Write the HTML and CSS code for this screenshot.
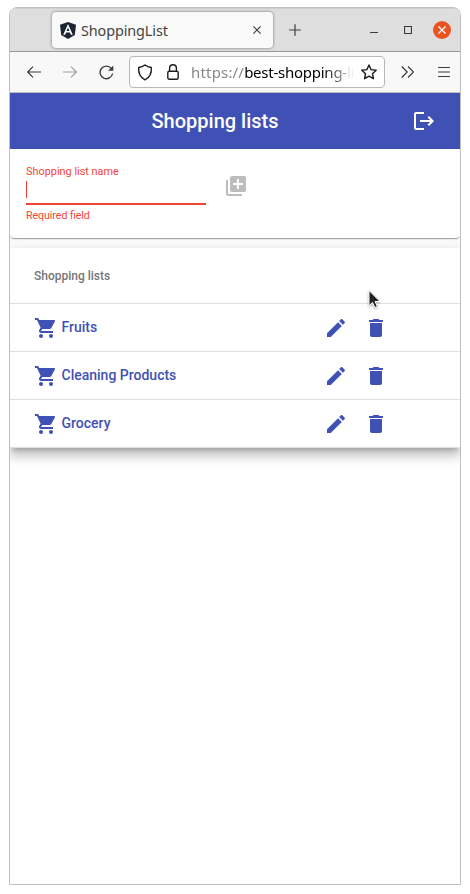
FILE: index.html
```html
<!DOCTYPE html>
<html lang="en">
<head>
<meta charset="utf-8">
<title>ShoppingList</title>
<link rel="stylesheet" href="styles.css">
</head>
<body>
<svg class="defs" width="0" height="0" aria-hidden="true">
  <symbol id="cart" viewBox="0 0 24 24"><path d="M7 18c-1.1 0-1.99.9-1.99 2S5.900 22 7 22s2-.9 2-2-.9-2-2-2zM1 2v2h2l3.600 7.590-1.350 2.450c-.16.28-.25.61-.25.96 0 1.100.9 2 2 2h12v-2H7.420c-.14 0-.25-.11-.25-.25l.03-.12.900-1.630h7.450c.75 0 1.410-.41 1.750-1.030l3.580-6.490c.08-.14.12-.31.12-.48 0-.55-.45-1-1-1H5.210l-.94-2H1zm16 16c-1.100 0-1.990.9-1.990 2s.89 2 1.990 2 2-.9 2-2-.9-2-2-2z"/></symbol>
  <symbol id="edit" viewBox="0 0 24 24"><path d="M3 17.250V21h3.750L17.810 9.940l-3.750-3.750L3 17.250zM20.710 7.040c.39-.39.39-1.020 0-1.410l-2.340-2.340c-.39-.39-1.020-.39-1.410 0l-1.830 1.830 3.750 3.750 1.830-1.830z"/></symbol>
  <symbol id="trash" viewBox="0 0 24 24"><path d="M6 19c0 1.100.9 2 2 2h8c1.100 0 2-.9 2-2V7H6v12zM19 4h-3.500l-1-1h-5l-1 1H5v2h14V4z"/></symbol>
</svg>
<div class="window">
  <header class="titlebar">
    <div class="tab">
      <svg class="favicon" width="16" height="17" viewBox="0 0 16 17"><path fill="#1b2430" d="M8 0l8 2.700-1.200 10.200L8 17l-6.800-4.100L0 2.700z"/><path fill="#fff" fill-rule="evenodd" d="M8 1.900L3.200 12.800h1.900l1-2.400h3.800l1 2.400h1.900zM8 5.500l1.400 3.400H6.600z"/></svg>
      <span class="tab-title">ShoppingList</span>
      <svg class="tab-close" width="8" height="8" viewBox="0 0 8 8"><path d="M.4.4l7.200 7.200M7.600.4L.4 7.600"/></svg>
    </div>
    <svg class="line plus" width="12" height="12" viewBox="0 0 12 12"><path d="M6 .2v11.600M.2 6h11.600"/></svg>
    <svg class="line minimize" width="8" height="10" viewBox="0 0 8 10"><path d="M0 7.500h8"/></svg>
    <svg class="line maximize" width="8" height="8" viewBox="0 0 8 8"><path d="M.5.5h7v7h-7z"/></svg>
    <div class="close"><svg width="8" height="8" viewBox="0 0 8 8"><path d="M.5.5l7 7M7.500.5l-7 7"/></svg></div>
  </header>
  <div class="toolbar">
    <svg class="line back" width="14" height="12" viewBox="0 0 14 12"><path d="M14 6H.8M6 .6L.7 6 6 11.400"/></svg>
    <svg class="line forward" width="14" height="12" viewBox="0 0 14 12"><path d="M0 6h13.200M8 .6L13.300 6 8 11.400"/></svg>
    <svg class="line reload" width="15" height="15" viewBox="0 0 15 15"><path d="M12.400 3.600A6.300 6.300 0 1 0 13.600 8.500"/><path class="solid" d="M14.300.6v5.200H9.100z"/></svg>
    <div class="urlbar">
      <svg class="glyph shield" width="16" height="17" viewBox="0 0 16 17"><path d="M8 1c1.800 1.500 3.900 2.300 6.300 2.500.4 5-1.300 9.800-6.300 12.300C3 13.300 1.300 8.500 1.700 3.500 4.100 3.300 6.200 2.500 8 1z"/></svg>
      <svg class="glyph lock" width="12" height="16" viewBox="0 0 12 16"><rect x=".8" y="7.200" width="10.400" height="8" rx="1.500"/><path d="M2.600 7V4.200a3.400 3.400 0 0 1 6.800 0V7"/></svg>
      <div class="url"><span class="scheme">https://</span><b>best-shopping-</b>li</div>
      <svg class="glyph star" width="16" height="16" viewBox="0 0 16 16"><path d="M8 1l2.100 4.600 5.100.6-3.700 3.500.9 5L8 12.200l-4.400 2.500.9-5L.8 6.200l5.100-.6z"/></svg>
    </div>
    <svg class="line more" width="13" height="12" viewBox="0 0 13 12"><path d="M.7.500L6.200 6 .7 11.500M7 .5L12.500 6 7 11.500"/></svg>
    <svg class="line menu" width="12" height="10" viewBox="0 0 12 10"><path d="M0 .5h12M0 5h12M0 9.500h12"/></svg>
  </div>
  <main class="page">
    <div class="appbar">
      <h1>Shopping lists</h1>
      <svg class="logout" width="24" height="24" viewBox="0 0 24 24"><path d="M17 7l-1.410 1.410L18.170 11H8v2h10.170l-2.580 2.580L17 17l5-5zM4 5h8V3H4c-1.100 0-2 .9-2 2v14c0 1.100.9 2 2 2h8v-2H4V5z"/></svg>
    </div>
    <section class="form-card">
      <div class="field">
        <label>Shopping list name</label>
        <div class="input"><span class="caret"></span></div>
        <div class="error">Required field</div>
      </div>
      <svg class="add" width="24" height="24" viewBox="0 0 24 24"><path d="M4 6H2v14c0 1.100.9 2 2 2h14v-2H4V6zm16-4H8c-1.100 0-2 .9-2 2v12c0 1.100.9 2 2 2h12c1.100 0 2-.9 2-2V4c0-1.100-.9-2-2-2zm-1 9h-4v4h-2v-4H9V9h4V5h2v4h4v2z"/></svg>
    </section>
    <section class="list-card">
      <h2>Shopping lists</h2>
      <div class="row"><svg class="icon"><use href="#cart"/></svg><span class="name">Fruits</span><svg class="icon"><use href="#edit"/></svg><svg class="icon"><use href="#trash"/></svg></div>
      <div class="row"><svg class="icon"><use href="#cart"/></svg><span class="name">Cleaning Products</span><svg class="icon"><use href="#edit"/></svg><svg class="icon"><use href="#trash"/></svg></div>
      <div class="row"><svg class="icon"><use href="#cart"/></svg><span class="name">Grocery</span><svg class="icon"><use href="#edit"/></svg><svg class="icon"><use href="#trash"/></svg></div>
    </section>
  </main>
</div>
<svg class="pointer" width="15" height="21" viewBox="0 0 15 21"><path d="M2 1.500v15.200l3.500-3.300 2.400 5.200 2.500-1.200L8 12.500h5z"/></svg>
</body>
</html>
```
FILE: styles.css
```css
* { box-sizing: border-box; }
body { margin: 0; background: #fff; font-family: Roboto, sans-serif; }
svg { display: block; flex: none; }
.defs { position: absolute; }

.window {
  width: 452px;
  height: 878px;
  margin: 7px 0 0 9px;
  border: 1px solid #c0c0c0;
  border-radius: 8px 8px 0 0;
  overflow: hidden;
}

/* Browser chrome */
.titlebar {
  display: flex;
  align-items: center;
  height: 44px;
  padding: 0 9px 0 42px;
  background: #dedede;
  border-bottom: 1px solid #989898;
  box-shadow: inset 0 1px #cfcfcf;
}
.tab {
  display: flex;
  align-items: center;
  width: 221px;
  height: 36px;
  margin-top: 1px;
  padding: 0 12px 0 8px;
  background: #f9f9f9;
  border-radius: 4px;
  box-shadow: 0 0 3px rgba(0, 0, 0, .5);
}
.tab-title {
  flex: 1;
  margin-left: 5px;
  padding-top: 1px;
  font: 14.400px/20px "Noto Sans", sans-serif;
  letter-spacing: -.1px;
  color: #444;
}
.tab-close, .line, .glyph, .close svg { fill: none; stroke: #3c3c3c; stroke-width: 1.200; }
.plus { margin: 1px 0 0 16px; }
.minimize { margin-left: auto; }
.maximize { margin: 0 21px 0 26px; }
.close {
  display: grid;
  place-items: center;
  width: 18px;
  height: 18px;
  border-radius: 50%;
  background: #e95420;
}
.close svg { stroke: #fff; stroke-width: 1.400; }

.toolbar {
  display: flex;
  align-items: center;
  height: 41px;
  padding: 0 10px 0 17px;
  background: #f8f8f8;
  border-bottom: 1px solid #bdbdbd;
}
.forward { margin-left: 22px; opacity: .45; }
.reload { margin-left: 22px; stroke-width: 1.400; }
.solid { fill: #3c3c3c; stroke: none; }
.urlbar {
  display: flex;
  align-items: center;
  width: 256px;
  height: 32px;
  margin-left: 15px;
  padding: 0 7px;
  background: #fff;
  border: 1px solid #b8b8b8;
  border-radius: 4px;
}
.glyph { stroke: #1c1c1c; stroke-width: 1.400; stroke-linejoin: round; }
.lock { margin-left: 14px; }
.url {
  flex: 1;
  min-width: 0;
  margin: 0 6px 0 12px;
  white-space: nowrap;
  font: 15px/24px "Noto Sans", sans-serif;
  letter-spacing: -.25px;
  color: #888;
  -webkit-mask-image: linear-gradient(90deg, #000 132px, transparent 166px);
  mask-image: linear-gradient(90deg, #000 132px, transparent 166px);
}
.scheme { letter-spacing: .18px; }
.url b { font-weight: 400; color: #000; }
.more { margin-left: 16px; }
.menu { margin-left: auto; }

/* Application */
.appbar {
  display: flex;
  align-items: center;
  height: 56px;
  padding: 0 24px 0 8px;
  background: #3f51b5;
  color: #fff;
}
.appbar h1 {
  flex: 1;
  margin: 0;
  font-size: 20px;
  font-weight: 500;
  line-height: 32px;
  text-align: center;
}
.logout { fill: #fff; }

.form-card {
  display: flex;
  align-items: flex-start;
  height: 89px;
  padding: 16px;
  border-radius: 0 0 4px 4px;
  box-shadow: 0 2px 1px -1px rgba(0, 0, 0, .2), 0 1px 1px rgba(0, 0, 0, .14), 0 1px 3px rgba(0, 0, 0, .12);
}
.field { width: 180px; color: #f44336; font-size: 10.500px; line-height: 13px; }
.field label { display: block; font-size: 10.900px; }
.input { height: 27px; padding-top: 3px; border-bottom: 2px solid #f44336; }
.caret { display: block; width: 1px; height: 17px; background: #f44336; }
.error { margin-top: 4px; }
.add { margin: 9px 0 0 18px; fill: #bdbdbd; }

.list-card {
  margin-top: 10px;
  background: #fff;
  box-shadow: 0 5px 5px -3px rgba(0, 0, 0, .2), 0 8px 10px 1px rgba(0, 0, 0, .14), 0 3px 14px 2px rgba(0, 0, 0, .12);
}
.list-card h2 {
  height: 56px;
  margin: 0;
  padding-left: 24px;
  border-bottom: 1px solid #e0e0e0;
  font-size: 12px;
  font-weight: 500;
  line-height: 56px;
  color: #757575;
}
.row {
  display: flex;
  align-items: center;
  height: 48px;
  padding: 0 72.500px 0 24px;
  border-bottom: 1px solid #e0e0e0;
}
.icon { width: 24px; height: 24px; fill: #3f51b5; }
.icon:last-child { margin-left: 16px; }
.name {
  flex: 1;
  padding: 0 0 1px 3.500px;
  font-size: 14px;
  font-weight: 500;
  line-height: 20px;
  color: #3f51b5;
}

.pointer {
  position: absolute;
  left: 367px;
  top: 289px;
  fill: #222;
  stroke: #fff;
  stroke-width: 1;
  filter: drop-shadow(0 1px 1px rgba(0, 0, 0, .35));
}
```
